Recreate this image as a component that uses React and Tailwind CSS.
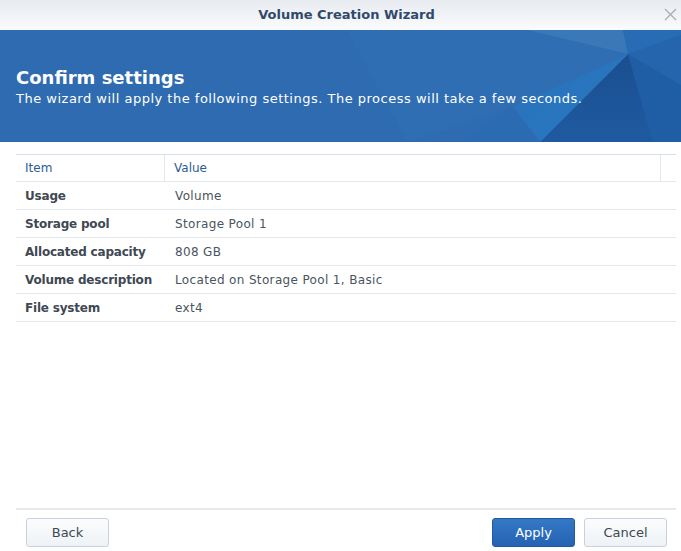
const rows = [
  ['Usage', 'Volume'],
  ['Storage pool', 'Storage Pool 1'],
  ['Allocated capacity', '808 GB'],
  ['Volume description', 'Located on Storage Pool 1, Basic'],
  ['File system', 'ext4'],
]

// decorative low-poly art on the right side of the banner
function BannerArt() {
  return (
    <svg className="absolute inset-0 h-full w-full" viewBox="0 0 681 112" preserveAspectRatio="none">
      <defs>
        <linearGradient id="bright" x1="0" y1="0" x2="1" y2="1">
          <stop offset="0" stopColor="#2a71b8" />
          <stop offset="0.6" stopColor="#2876bf" />
          <stop offset="1" stopColor="#2a6db4" />
        </linearGradient>
        <linearGradient id="dark" x1="0" y1="0" x2="0" y2="1">
          <stop offset="0" stopColor="#1a4f90" />
          <stop offset="1" stopColor="#1f5aa0" />
        </linearGradient>
      </defs>
      <polygon points="347,0 527,0 628,24 513,77 407,112" fill="#2f6eb3" />
      <polygon points="527,0 623,0 628,24" fill="#3a78b8" />
      <polygon points="623,0 681,0 681,5 628,24" fill="#276cb4" />
      <polygon points="628,24 681,5 681,55" fill="#2465ad" />
      <polygon points="628,24 681,55 681,112 653,112" fill="#1f5da4" />
      <polygon points="628,24 653,112 540,112" fill="url(#dark)" />
      <polygon points="628,24 540,112 513,77" fill="url(#bright)" />
      <polygon points="513,77 540,112 460,112" fill="#2a6bb2" />
    </svg>
  )
}

function Btn({ children, primary }) {
  return (
    <button
      className={`h-[29px] w-[83px] rounded-[3px] border text-[13px] ${
        primary
          ? 'border-[#2359a0] bg-gradient-to-b from-[#3478c6] to-[#2563b2] text-white'
          : 'border-[#c9d2dc] bg-gradient-to-b from-[#fbfcfd] to-[#eef2f6] text-[#3e4852]'
      }`}
    >
      {children}
    </button>
  )
}

export default function App() {
  return (
    <div className="flex h-[551px] w-[681px] flex-col bg-white" style={{ fontFamily: '"DejaVu Sans", Verdana, sans-serif' }}>
      <div className="relative flex h-[30px] shrink-0 items-center justify-center bg-gradient-to-b from-[#e7ebf0] to-[#fafbfc] pl-[12px]">
        <span className="text-[13px] font-bold text-[#2f4a6c]">Volume Creation Wizard</span>
        <svg className="absolute right-[4px] top-[8px]" width="13" height="13" viewBox="0 0 13 13">
          <path d="M1 1L12 12M12 1L1 12" stroke="#a9b0b8" strokeWidth="1.4" />
        </svg>
      </div>

      <div className="relative h-[112px] shrink-0 overflow-hidden bg-[#2e6bb0]">
        <BannerArt />
        <div className="relative px-4 pt-[36px] text-white">
          <div className="text-[18px] font-bold leading-[24px]">Confirm settings</div>
          <div className="text-[13px] leading-[18px] tracking-[0.5px]">The wizard will apply the following settings. The process will take a few seconds.</div>
        </div>
      </div>

      <div className="mx-4 mt-3 mr-[5px] flex-1 border-t border-[#d5e0ec] text-[12px]">
        <div className="flex h-[27px] items-center border-b border-[#e3e8ee] text-[#2c5b94]">
          <div className="flex h-full w-[149px] items-center border-r border-[#e3e8ee] pl-[9px]">Item</div>
          <div className="flex h-full flex-1 items-center border-r border-[#e3e8ee] pl-[9px]">Value</div>
          <div className="w-[15px]" />
        </div>
        {rows.map(([k, v]) => (
          <div key={k} className="flex h-[28px] items-center border-b border-[#e3e8ee]">
            <div className="w-[150px] pl-[9px] font-bold tracking-[-0.2px] text-[#3f4853]">{k}</div>
            <div className="pl-[9px] tracking-[0.35px] text-[#4a545e]">{v}</div>
          </div>
        ))}
      </div>

      <div className="mx-4 mr-[5px] border-t-2 border-[#e5e9ee]" />
      <div className="flex h-[41px] items-start justify-between pl-[26px] pr-[14px] pt-[8px]">
        <Btn>Back</Btn>
        <div className="flex gap-[9px]">
          <Btn primary>Apply</Btn>
          <Btn>Cancel</Btn>
        </div>
      </div>
    </div>
  )
}
